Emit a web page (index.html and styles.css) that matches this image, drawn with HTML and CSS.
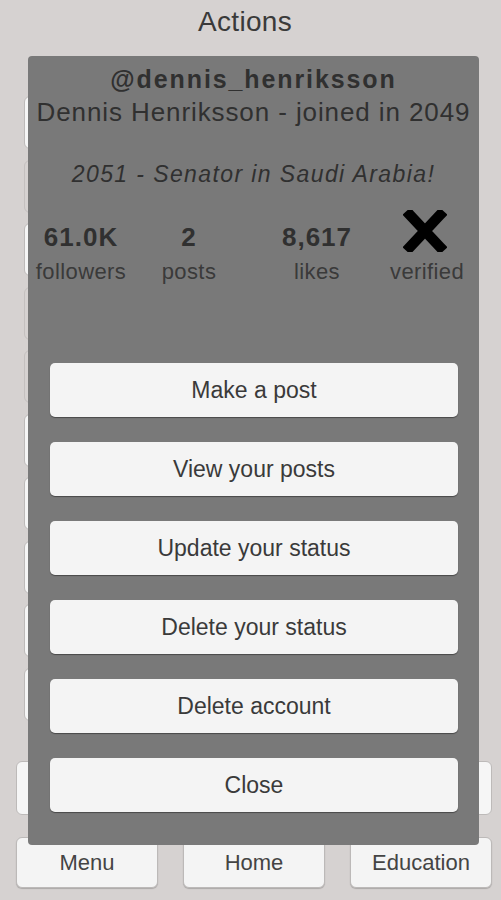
FILE: index.html
```html
<!DOCTYPE html>
<html>

<head>
    <meta charset="UTF-8">
    <title>Actions</title>
    <link rel="stylesheet" href="styles.css">
</head>

<body>
    <div id="screen">
        <h1 class="title">Actions</h1>

        <!-- list of actions that sits behind the profile popup -->
        <ul class="action-list">
            <li><button class="back-btn"></button></li>
            <li><button class="back-btn faint"></button></li>
            <li><button class="back-btn"></button></li>
            <li><button class="back-btn faint"></button></li>
            <li><button class="back-btn faint"></button></li>
            <li><button class="back-btn"></button></li>
            <li><button class="back-btn"></button></li>
            <li><button class="back-btn"></button></li>
            <li><button class="back-btn"></button></li>
            <li><button class="back-btn"></button></li>
        </ul>

        <div class="pair-row">
            <button class="back-btn"></button>
            <button class="back-btn"></button>
        </div>

        <div class="nav-row">
            <button class="nav-btn">Menu</button>
            <button class="nav-btn">Home</button>
            <button class="nav-btn">Education</button>
        </div>

        <!-- profile popup -->
        <div id="profilePanel">
            <div class="handle">@dennis_henriksson</div>
            <div class="fullname">Dennis Henriksson - joined in 2049</div>
            <div class="status">2051 - Senator in Saudi Arabia!</div>

            <div class="stats">
                <div class="stat">
                    <div class="stat-value">61.0K</div>
                    <div class="stat-label">followers</div>
                </div>
                <div class="stat">
                    <div class="stat-value">2</div>
                    <div class="stat-label">posts</div>
                </div>
                <div class="stat">
                    <div class="stat-value">8,617</div>
                    <div class="stat-label">likes</div>
                </div>
                <div class="stat">
                    <div class="stat-value">
                        <svg width="44" height="42" viewBox="0 0 44 42">
                            <path d="M7 5 L37 37 M37 5 L7 37" stroke="#000" stroke-width="10.5" stroke-linecap="square" fill="none" />
                        </svg>
                    </div>
                    <div class="stat-label">verified</div>
                </div>
            </div>

            <div class="panel-buttons">
                <button class="panel-btn">Make a post</button>
                <button class="panel-btn">View your posts</button>
                <button class="panel-btn">Update your status</button>
                <button class="panel-btn">Delete your status</button>
                <button class="panel-btn">Delete account</button>
                <button class="panel-btn">Close</button>
            </div>
        </div>
    </div>
</body>

</html>
```

FILE: styles.css
```css
body {
    margin: 0;
    background-color: #d6d2d1;
    font-family: "Liberation Sans", Arial, sans-serif;
    color: #333;
}

#screen {
    position: relative;
    width: 501px;
    height: 900px;
    overflow: hidden;
}

.title {
    margin: 0;
    padding-right: 11px;
    height: 44px;
    line-height: 44px;
    text-align: center;
    font-size: 28px;
    font-weight: normal;
    letter-spacing: 0.3px;
    color: #3a3a3a;
}

button {
    font-family: inherit;
    cursor: pointer;
}

.action-list {
    list-style-type: none;
    margin: 52px 0 0 0;
    padding: 0 24px;
    display: flex;
    flex-direction: column;
    gap: 10.5px;
}

.back-btn {
    display: block;
    width: 100%;
    height: 53px;
    background-color: #f6f6f6;
    border: 1px solid #bdbab9;
    border-radius: 6px;
}

.back-btn.faint {
    background-color: transparent;
    border-color: #c4c0bf;
}

.pair-row {
    margin-top: 40.5px;
    padding: 0 9px 0 16px;
    display: grid;
    grid-template-columns: 1fr 1fr;
    gap: 10px;
}

.pair-row .back-btn {
    height: 54px;
}

.nav-row {
    margin-top: 22px;
    padding: 0 9px 0 16px;
    display: grid;
    grid-template-columns: repeat(3, 1fr);
    column-gap: 25px;
}

.nav-btn {
    height: 51px;
    background-color: #f4f4f4;
    border: 1px solid #bcb9b8;
    border-radius: 6px;
    box-shadow: 0 1px 1px rgba(0, 0, 0, 0.2);
    font-size: 22px;
    color: #444;
    padding: 0;
}

#profilePanel {
    position: absolute;
    left: 28px;
    top: 56px;
    width: 451px;
    height: 789px;
    box-sizing: border-box;
    padding-top: 8px;
    background-color: #797979;
    border-radius: 4px;
    text-align: center;
    color: #303030;
}

.handle {
    line-height: 30px;
    font-size: 25px;
    font-weight: bold;
    letter-spacing: 1.9px;
}

.fullname {
    margin-top: 3px;
    line-height: 30px;
    font-size: 26px;
    letter-spacing: 0.9px;
    white-space: nowrap;
}

.status {
    margin-top: 32px;
    line-height: 30px;
    font-size: 23px;
    font-style: italic;
    letter-spacing: 1.4px;
}

.stats {
    margin-top: 21px;
    display: grid;
    grid-template-columns: 106px 110px 146px 70px;
}

.stat-value {
    height: 42px;
    display: flex;
    align-items: flex-end;
    justify-content: center;
    line-height: 29px;
    font-size: 26px;
    font-weight: bold;
    letter-spacing: 1px;
}

.stat-value svg {
    display: block;
}

.stat-label {
    margin-top: 7px;
    line-height: 26px;
    font-size: 22px;
    letter-spacing: 0.4px;
    color: #3a3a3a;
}

.panel-buttons {
    margin-top: 78px;
    padding: 0 21px 0 22px;
    display: flex;
    flex-direction: column;
    gap: 25px;
}

.panel-btn {
    height: 54px;
    background-color: #f4f4f4;
    border: none;
    border-radius: 5px;
    box-shadow: 0 1px 1px rgba(0, 0, 0, 0.4);
    font-size: 23px;
    color: #3a3a3a;
    padding: 0;
}
```
